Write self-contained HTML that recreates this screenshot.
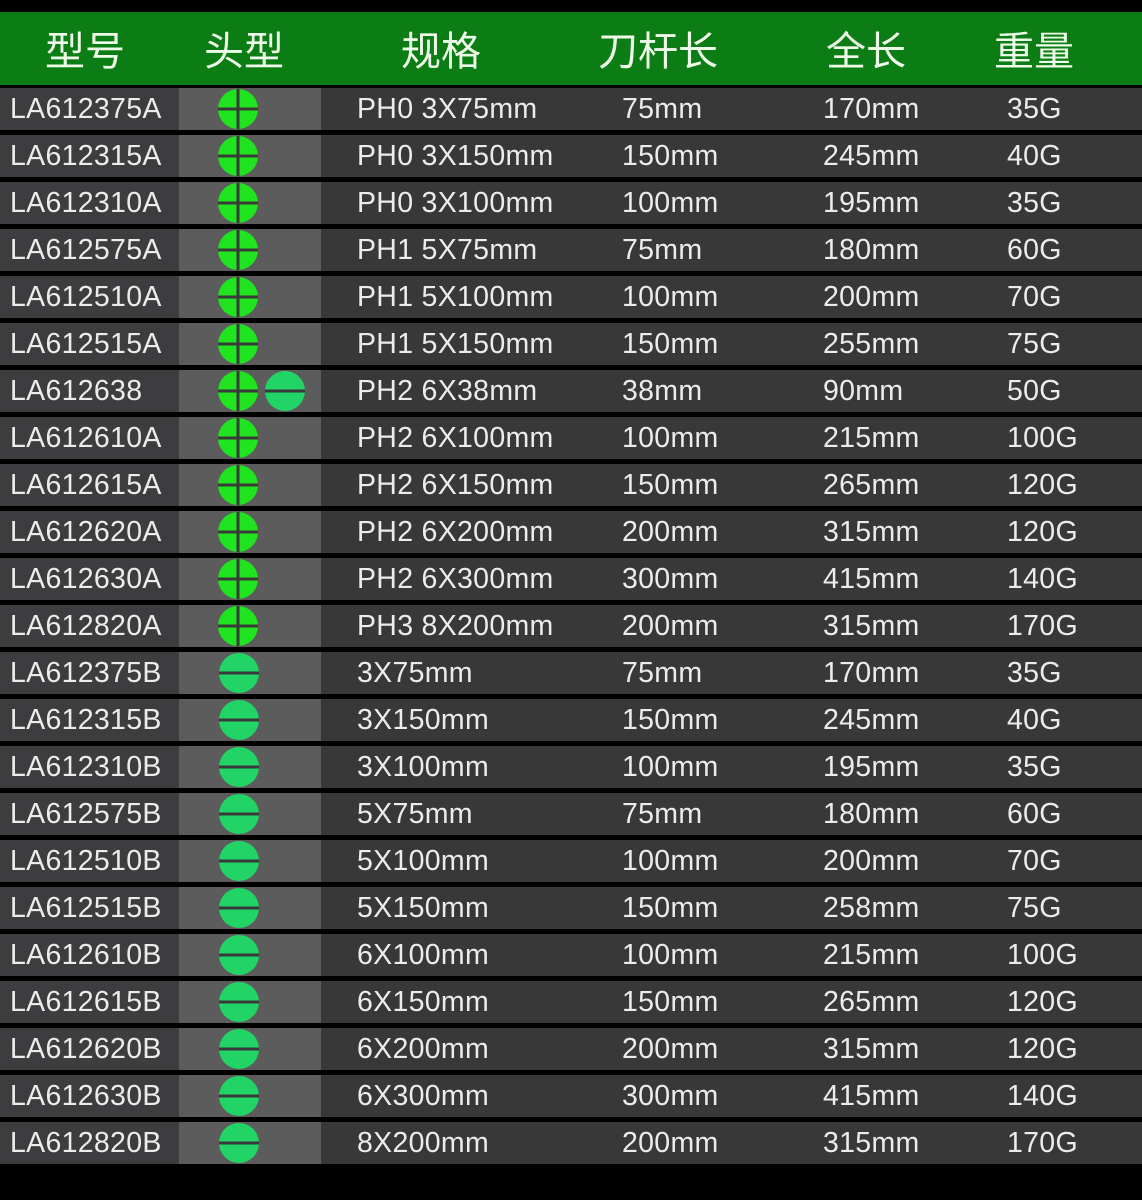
<!DOCTYPE html>
<html><head><meta charset="utf-8"><style>
*{margin:0;padding:0;box-sizing:border-box}
body{width:1142px;height:1200px;background:#000;position:relative;overflow:hidden;font-family:"Liberation Sans","Noto Sans CJK SC",sans-serif;color:#ececec}
.hd{position:absolute;left:0;top:12px;width:1142px;height:73px;background:#0b7d14}
.hd span{position:absolute;top:14px;font-family:"Noto Sans CJK SC",sans-serif;font-size:40px;line-height:44px;color:#eefbe8;transform:translateX(-50%)}
.r{position:absolute;left:0;width:1142px;height:42px;background:#383838}
.r .c2{position:absolute;left:179px;top:0;width:142px;height:42px;background:#5c5c5c}
.r .c1{position:absolute;left:0;top:0;width:179px;height:42px;background:#3d3d3f}
.r span{position:absolute;top:6px;font-size:28.5px;letter-spacing:0.3px;line-height:30px;white-space:nowrap}
.r svg{position:absolute;top:1px}
</style></head><body>
<div class="hd">
<span style="left:85px">型号</span><span style="left:244px">头型</span><span style="left:441px">规格</span><span style="left:658px">刀杆长</span><span style="left:866px">全长</span><span style="left:1034px">重量</span>
</div>
<svg width="0" height="0" style="position:absolute"><defs>
<g id="ph"><circle cx="20" cy="20" r="20" fill="#1fe41f"/><rect x="18.5" y="0" width="3" height="40" fill="#3a3a3a"/><rect x="0" y="18.5" width="40" height="3" fill="#3a3a3a"/></g>
<g id="sl"><circle cx="20" cy="20" r="20" fill="#22d466"/><rect x="0" y="18.5" width="40" height="3" fill="#3a3a3a"/></g>
</defs></svg>
<div id="rows">
<div class="r" style="top:88px"><div class="c1"></div><div class="c2"></div><span style="left:10px">LA612375A</span><svg style="left:218px" width="40" height="40"><use href="#ph"/></svg><span style="left:357px">PH0 3X75mm</span><span style="left:622px">75mm</span><span style="left:823px">170mm</span><span style="left:1007px">35G</span></div>
<div class="r" style="top:135px"><div class="c1"></div><div class="c2"></div><span style="left:10px">LA612315A</span><svg style="left:218px" width="40" height="40"><use href="#ph"/></svg><span style="left:357px">PH0 3X150mm</span><span style="left:622px">150mm</span><span style="left:823px">245mm</span><span style="left:1007px">40G</span></div>
<div class="r" style="top:182px"><div class="c1"></div><div class="c2"></div><span style="left:10px">LA612310A</span><svg style="left:218px" width="40" height="40"><use href="#ph"/></svg><span style="left:357px">PH0 3X100mm</span><span style="left:622px">100mm</span><span style="left:823px">195mm</span><span style="left:1007px">35G</span></div>
<div class="r" style="top:229px"><div class="c1"></div><div class="c2"></div><span style="left:10px">LA612575A</span><svg style="left:218px" width="40" height="40"><use href="#ph"/></svg><span style="left:357px">PH1 5X75mm</span><span style="left:622px">75mm</span><span style="left:823px">180mm</span><span style="left:1007px">60G</span></div>
<div class="r" style="top:276px"><div class="c1"></div><div class="c2"></div><span style="left:10px">LA612510A</span><svg style="left:218px" width="40" height="40"><use href="#ph"/></svg><span style="left:357px">PH1 5X100mm</span><span style="left:622px">100mm</span><span style="left:823px">200mm</span><span style="left:1007px">70G</span></div>
<div class="r" style="top:323px"><div class="c1"></div><div class="c2"></div><span style="left:10px">LA612515A</span><svg style="left:218px" width="40" height="40"><use href="#ph"/></svg><span style="left:357px">PH1 5X150mm</span><span style="left:622px">150mm</span><span style="left:823px">255mm</span><span style="left:1007px">75G</span></div>
<div class="r" style="top:370px"><div class="c1"></div><div class="c2"></div><span style="left:10px">LA612638</span><svg style="left:218px" width="40" height="40"><use href="#ph"/></svg><svg style="left:265px" width="40" height="40"><use href="#sl"/></svg><span style="left:357px">PH2 6X38mm</span><span style="left:622px">38mm</span><span style="left:823px">90mm</span><span style="left:1007px">50G</span></div>
<div class="r" style="top:417px"><div class="c1"></div><div class="c2"></div><span style="left:10px">LA612610A</span><svg style="left:218px" width="40" height="40"><use href="#ph"/></svg><span style="left:357px">PH2 6X100mm</span><span style="left:622px">100mm</span><span style="left:823px">215mm</span><span style="left:1007px">100G</span></div>
<div class="r" style="top:464px"><div class="c1"></div><div class="c2"></div><span style="left:10px">LA612615A</span><svg style="left:218px" width="40" height="40"><use href="#ph"/></svg><span style="left:357px">PH2 6X150mm</span><span style="left:622px">150mm</span><span style="left:823px">265mm</span><span style="left:1007px">120G</span></div>
<div class="r" style="top:511px"><div class="c1"></div><div class="c2"></div><span style="left:10px">LA612620A</span><svg style="left:218px" width="40" height="40"><use href="#ph"/></svg><span style="left:357px">PH2 6X200mm</span><span style="left:622px">200mm</span><span style="left:823px">315mm</span><span style="left:1007px">120G</span></div>
<div class="r" style="top:558px"><div class="c1"></div><div class="c2"></div><span style="left:10px">LA612630A</span><svg style="left:218px" width="40" height="40"><use href="#ph"/></svg><span style="left:357px">PH2 6X300mm</span><span style="left:622px">300mm</span><span style="left:823px">415mm</span><span style="left:1007px">140G</span></div>
<div class="r" style="top:605px"><div class="c1"></div><div class="c2"></div><span style="left:10px">LA612820A</span><svg style="left:218px" width="40" height="40"><use href="#ph"/></svg><span style="left:357px">PH3 8X200mm</span><span style="left:622px">200mm</span><span style="left:823px">315mm</span><span style="left:1007px">170G</span></div>
<div class="r" style="top:652px"><div class="c1"></div><div class="c2"></div><span style="left:10px">LA612375B</span><svg style="left:219px" width="40" height="40"><use href="#sl"/></svg><span style="left:357px">3X75mm</span><span style="left:622px">75mm</span><span style="left:823px">170mm</span><span style="left:1007px">35G</span></div>
<div class="r" style="top:699px"><div class="c1"></div><div class="c2"></div><span style="left:10px">LA612315B</span><svg style="left:219px" width="40" height="40"><use href="#sl"/></svg><span style="left:357px">3X150mm</span><span style="left:622px">150mm</span><span style="left:823px">245mm</span><span style="left:1007px">40G</span></div>
<div class="r" style="top:746px"><div class="c1"></div><div class="c2"></div><span style="left:10px">LA612310B</span><svg style="left:219px" width="40" height="40"><use href="#sl"/></svg><span style="left:357px">3X100mm</span><span style="left:622px">100mm</span><span style="left:823px">195mm</span><span style="left:1007px">35G</span></div>
<div class="r" style="top:793px"><div class="c1"></div><div class="c2"></div><span style="left:10px">LA612575B</span><svg style="left:219px" width="40" height="40"><use href="#sl"/></svg><span style="left:357px">5X75mm</span><span style="left:622px">75mm</span><span style="left:823px">180mm</span><span style="left:1007px">60G</span></div>
<div class="r" style="top:840px"><div class="c1"></div><div class="c2"></div><span style="left:10px">LA612510B</span><svg style="left:219px" width="40" height="40"><use href="#sl"/></svg><span style="left:357px">5X100mm</span><span style="left:622px">100mm</span><span style="left:823px">200mm</span><span style="left:1007px">70G</span></div>
<div class="r" style="top:887px"><div class="c1"></div><div class="c2"></div><span style="left:10px">LA612515B</span><svg style="left:219px" width="40" height="40"><use href="#sl"/></svg><span style="left:357px">5X150mm</span><span style="left:622px">150mm</span><span style="left:823px">258mm</span><span style="left:1007px">75G</span></div>
<div class="r" style="top:934px"><div class="c1"></div><div class="c2"></div><span style="left:10px">LA612610B</span><svg style="left:219px" width="40" height="40"><use href="#sl"/></svg><span style="left:357px">6X100mm</span><span style="left:622px">100mm</span><span style="left:823px">215mm</span><span style="left:1007px">100G</span></div>
<div class="r" style="top:981px"><div class="c1"></div><div class="c2"></div><span style="left:10px">LA612615B</span><svg style="left:219px" width="40" height="40"><use href="#sl"/></svg><span style="left:357px">6X150mm</span><span style="left:622px">150mm</span><span style="left:823px">265mm</span><span style="left:1007px">120G</span></div>
<div class="r" style="top:1028px"><div class="c1"></div><div class="c2"></div><span style="left:10px">LA612620B</span><svg style="left:219px" width="40" height="40"><use href="#sl"/></svg><span style="left:357px">6X200mm</span><span style="left:622px">200mm</span><span style="left:823px">315mm</span><span style="left:1007px">120G</span></div>
<div class="r" style="top:1075px"><div class="c1"></div><div class="c2"></div><span style="left:10px">LA612630B</span><svg style="left:219px" width="40" height="40"><use href="#sl"/></svg><span style="left:357px">6X300mm</span><span style="left:622px">300mm</span><span style="left:823px">415mm</span><span style="left:1007px">140G</span></div>
<div class="r" style="top:1122px"><div class="c1"></div><div class="c2"></div><span style="left:10px">LA612820B</span><svg style="left:219px" width="40" height="40"><use href="#sl"/></svg><span style="left:357px">8X200mm</span><span style="left:622px">200mm</span><span style="left:823px">315mm</span><span style="left:1007px">170G</span></div>
</div>
</body></html>
